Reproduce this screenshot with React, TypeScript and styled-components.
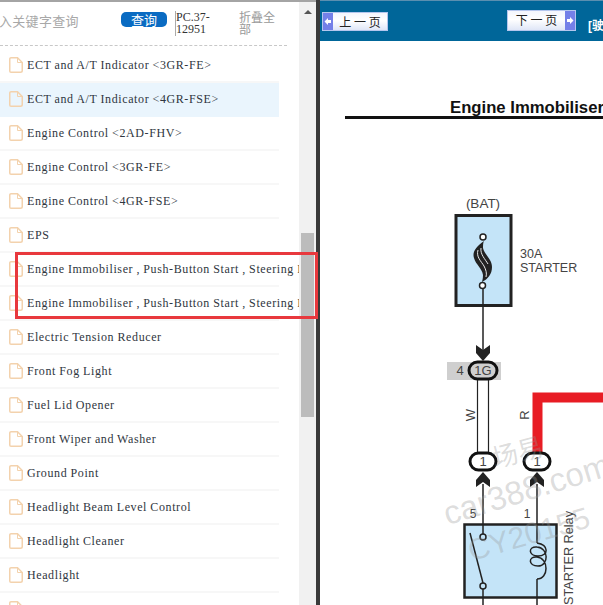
import React from "react";
import styled, { createGlobalStyle } from "styled-components";

const Global = createGlobalStyle`
  html, body { margin: 0; padding: 0; background: #fff; overflow: hidden; }
  #root { width: 603px; height: 605px; }
`;
const Page = styled.div`
  position: relative; display: flex; width: 603px; height: 605px; overflow: hidden;
  font-family: "Liberation Serif", "Noto Sans CJK SC", serif;
`;
const Sidebar = styled.aside`
  display: flex; flex: none; width: 316px; box-sizing: border-box;
  border-top: 2px solid #a4a4a4;
`;
const ListPane = styled.div`
  flex: none; width: 299px; overflow: hidden; background: #fff;
`;
const SearchBar = styled.div`
  display: flex; width: 287px; height: 44px; box-sizing: border-box; align-items: flex-start;
  border-bottom: 1px dashed #c8c8c8;
`;
const Keyword = styled.div`
  flex: none; width: 121px; margin-top: 9px; font: 13px/20px "Noto Sans CJK SC", sans-serif; color: #a8a8a8;
  letter-spacing: 0.3px; white-space: nowrap; overflow: hidden; text-indent: -1px;
`;
const QueryButton = styled.button`
  flex: none; width: 46px; height: 15px; margin-top: 10px; padding: 0; border: 0; border-radius: 5px;
  background: #0a6bc2; color: #fff; font: 13px/15px "Noto Sans CJK SC", sans-serif;
`;
const PartNo = styled.div`
  flex: none; width: 63px; margin: 9px 0 0 8px; padding-left: 0; box-sizing: border-box; height: 25px;
  border-left: 1px solid #aaa; font-size: 12px; line-height: 12px; color: #333;
`;
const Collapse = styled.div`
  flex: none; width: 37px; margin: 9px 0 0 1px; font: 12px/12px "Noto Sans CJK SC", sans-serif; color: #999;
`;
const Rows = styled.ul`
  list-style: none; margin: 3px 0 0; padding: 0;
`;
const Row = styled.li<{ $active?: boolean }>`
  display: flex; align-items: center; gap: 4px; width: 279px; height: 34px; box-sizing: border-box;
  padding-left: 9px; border-bottom: 2px solid #f7f7f7;
  background: ${(p) => (p.$active ? "#eaf5fd" : "#fff")};
  ${(p) => p.$active && "border-bottom-color: #eaf5fd;"}
  font-size: 12px; letter-spacing: 0.6px; word-spacing: -0.3px; color: #2f3640; white-space: nowrap;
`;
const RowLabel = styled.span`
  flex: none;
`;
const Track = styled.div`
  flex: none; width: 17px; background: #f1f1f1; position: relative;
`;
const ArrowUp = styled.div`
  width: 0; margin: 8px auto 0; border: 4px solid transparent; border-top: 0; border-bottom: 4px solid #555;
`;
const Thumb = styled.div`
  width: 13px; height: 184px; margin: 219px 0 0 2px; background: #bcbcbc;
`;
const Divider = styled.div`
  flex: none; width: 4px; background: #3a3a3a;
`;
const Viewer = styled.main`
  flex: 1; min-width: 0; display: flex; flex-direction: column; overflow: hidden;
`;
const Toolbar = styled.div`
  flex: none; display: flex; height: 41px; box-sizing: border-box; align-items: flex-start;
  background: #006699; border-top: 1px solid #5a8fb0; padding-left: 2px; white-space: nowrap;
`;
const PageButton = styled.button<{ $next?: boolean }>`
  flex: none; display: flex; flex-direction: ${(p) => (p.$next ? "row-reverse" : "row")}; align-items: stretch;
  width: ${(p) => (p.$next ? 69 : 66)}px; height: ${(p) => (p.$next ? 21 : 19)}px;
  margin: ${(p) => (p.$next ? "9px 0 0 119px" : "11px 0 0")};
  padding: 0; border: 1px solid #b4c6ee; background: linear-gradient(#f4f6fd, #fff 45%, #dfe6f7);
  font: 12px/17px "Noto Sans CJK SC", sans-serif; color: #222;
`;
const ArrowCap = styled.span`
  flex: none; width: 10px; display: flex; align-items: center; justify-content: center; background: #7480e8;
`;
const ButtonText = styled.span`
  flex: 1; text-align: center;
`;
const Crumb = styled.span`
  margin: 17px 0 0 12px; font: bold 12px/16px "Liberation Sans", "Noto Sans CJK SC", sans-serif; color: #fff;
`;
const Sheet = styled.div`
  flex: 1; min-height: 0; background: #fff;
`;
const Drawing = styled.svg`
  display: block; font-family: "Liberation Sans", sans-serif;
`;
const Highlight = styled.div`
  position: absolute; left: 15px; top: 252px; width: 303px; height: 67px; box-sizing: border-box;
  border: 3px solid #e8383d; pointer-events: none;
`;
const Watermark = styled.span<{ $x: number; $y: number; $size: number; $rot: number }>`
  position: absolute; left: ${(p) => p.$x}px; top: ${(p) => p.$y}px; font: ${(p) => p.$size}px/1 "Liberation Sans", "Noto Sans CJK SC", sans-serif;
  color: rgba(150, 150, 150, 0.32); transform: rotate(${(p) => p.$rot}deg); transform-origin: left bottom; white-space: nowrap; pointer-events: none;
`;

const items = [
  "ECT and A/T Indicator <3GR-FE>",
  "ECT and A/T Indicator <4GR-FSE>",
  "Engine Control <2AD-FHV>",
  "Engine Control <3GR-FE>",
  "Engine Control <4GR-FSE>",
  "EPS",
  "Engine Immobiliser , Push-Button Start , Steering Lock",
  "Engine Immobiliser , Push-Button Start , Steering Lock",
  "Electric Tension Reducer",
  "Front Fog Light",
  "Fuel Lid Opener",
  "Front Wiper and Washer",
  "Ground Point",
  "Headlight Beam Level Control",
  "Headlight Cleaner",
  "Headlight",
  "Horn",
];

const FileIcon = () => (
  <svg width="14" height="16" viewBox="0 0 14 16" fill="none" style={{ flex: "none" }}>
    <path d="M2 .75h6.5L13.25 5.5V13.5a1.75 1.75 0 0 1-1.75 1.75h-9.5A1.25 1.25 0 0 1 .75 14V2A1.25 1.25 0 0 1 2 .75Z" stroke="#f3d2ad" strokeWidth="1.5" />
    <path d="M8.5 1v4.5h4.5" stroke="#f3d2ad" strokeWidth="1" />
  </svg>
);

const CapArrow = ({ right }: { right?: boolean }) => (
  <svg width="8" height="9" viewBox="0 0 8 9">
    <path d={right ? "M1 3H4V1L7.500 4.500L4 8V6H1Z" : "M7 3H4V1L.5 4.500L4 8V6H7Z"} fill="#fff" />
  </svg>
);

const Pill = ({ x, y, w, label }: { x: number; y: number; w: number; label: string }) => (
  <g>
    <rect x={x} y={y} width={w} height={17} rx={8.5} fill="none" stroke="#111" strokeWidth="3" />
    <text x={x + w / 2} y={y + 13} fontSize="13" textAnchor="middle" fill="#444">{label}</text>
  </g>
);
const ArrowDown = ({ x, y }: { x: number; y: number }) => (
  <path d={`M${x - 7} ${y}L${x} ${y + 5}L${x + 7} ${y}V${y + 8}L${x} ${y + 16}L${x - 7} ${y + 8}Z`} fill="#222" />
);
const ArrowIn = ({ x, y }: { x: number; y: number }) => (
  <path d={`M${x - 7} ${y + 15}L${x} ${y + 10}L${x + 7} ${y + 15}V${y + 8}L${x} ${y}L${x - 7} ${y + 8}Z`} fill="#222" />
);

export default function App() {
  return (
    <Page>
      <Global />
      <Sidebar>
        <ListPane>
          <SearchBar>
            <Keyword>入关键字查询</Keyword>
            <QueryButton>查询</QueryButton>
            <PartNo>PC.37-12951</PartNo>
            <Collapse>折叠全部</Collapse>
          </SearchBar>
          <Rows>
            {items.map((t, i) => (
              <Row key={i} $active={i === 1}>
                <FileIcon />
                <RowLabel>{t}</RowLabel>
              </Row>
            ))}
          </Rows>
        </ListPane>
        <Track>
          <ArrowUp />
          <Thumb />
        </Track>
      </Sidebar>
      <Divider />
      <Viewer>
        <Toolbar>
          <PageButton>
            <ArrowCap><CapArrow /></ArrowCap>
            <ButtonText>上 一 页</ButtonText>
          </PageButton>
          <PageButton $next>
            <ArrowCap><CapArrow right /></ArrowCap>
            <ButtonText>下 一 页</ButtonText>
          </PageButton>
          <Crumb>[驶</Crumb>
        </Toolbar>
        <Sheet>
          <Drawing width="283" height="564" viewBox="320 41 283 564">
            <text x="450" y="113" fontSize="16.700" fontWeight="700" fill="#111">Engine Immobiliser</text>
            <rect x="345" y="116" width="258" height="3" fill="#111" />

            <text x="483" y="208" fontSize="13.500" textAnchor="middle" fill="#444">(BAT)</text>
            <rect x="456" y="215.500" width="55" height="90" fill="#c4e4f8" stroke="#222" strokeWidth="3" />
            <path d="M484 241C476 247 472 252 474 258C476 265 482 268 483 275C483 279 482 281 482 282C488 279 492 274 492 267C492 259 484 254 483 248C483 245 483 243 484 241Z" fill="#222" />
            <path d="M478 250C476 257 481 261 484 266C486 270 487 273 486 277M481 248C480 254 485 259 488 264" stroke="#e8e8e8" strokeWidth="1" fill="none" />
            <circle cx="483" cy="237" r="3" fill="#fff" stroke="#222" strokeWidth="1.500" />
            <circle cx="482.500" cy="285.500" r="3" fill="#fff" stroke="#222" strokeWidth="1.500" />
            <text x="520" y="258" fontSize="12.500" fill="#444">30A</text>
            <text x="520" y="272" fontSize="12.500" fill="#444">STARTER</text>
            <path d="M483 289V350" stroke="#222" strokeWidth="1.500" />
            <ArrowDown x={483} y={345} />

            <rect x="447" y="362" width="54" height="18" fill="#cfcfcf" />
            <text x="460" y="375" fontSize="13" textAnchor="middle" fill="#444">4</text>
            <Pill x={469} y={362} w={28} label="1G" />
            <path d="M477.500 380V452M488.500 380V452" stroke="#222" strokeWidth="1.200" />
            <text transform="translate(475 415) rotate(-90)" fontSize="13" textAnchor="middle" fill="#444">W</text>

            <path d="M537.500 452V397.500H603" fill="none" stroke="#e81c24" strokeWidth="10" />
            <text transform="translate(529 415) rotate(-90)" fontSize="13" textAnchor="middle" fill="#444">R</text>
            <Pill x={470} y={453} w={26} label="1" />
            <Pill x={524} y={453} w={26} label="1" />
            <ArrowIn x={483} y={472} />
            <ArrowIn x={537} y={472} />
            <path d="M483 484V536M537 484V543" stroke="#222" strokeWidth="1.500" />
            <text x="473" y="518" fontSize="12" textAnchor="middle" fill="#444">5</text>
            <text x="527" y="518" fontSize="12" textAnchor="middle" fill="#444">1</text>

            <rect x="464.500" y="524.500" width="92" height="73" fill="#c4e4f8" stroke="#222" strokeWidth="2.500" />
            <path d="M483 524V534M537 524V543" stroke="#222" strokeWidth="1.500" />
            <circle cx="483" cy="537" r="3" fill="#c4e4f8" stroke="#222" strokeWidth="1.500" />
            <circle cx="483" cy="586" r="3" fill="#c4e4f8" stroke="#222" strokeWidth="1.500" />
            <path d="M470 533L483 583" stroke="#222" strokeWidth="1.500" />
            <path d="M537 543C549 545 549 556 538 556C528 556 528 546 537 547C549 548 549 566 538 566C528 566 528 556 537 557C549 558 549 579 537 579" fill="none" stroke="#222" strokeWidth="1.500" />
            <path d="M483 589V605M537 579V605" stroke="#222" strokeWidth="1.500" />
            <text transform="translate(573 605) rotate(-90)" fontSize="12.700" fill="#444">STARTER Relay</text>
          </Drawing>
        </Sheet>
      </Viewer>
      <Highlight />
      <Watermark $x={496} $y={446} $size={26} $rot={-15}>场易</Watermark>
      <Watermark $x={449} $y={497} $size={33} $rot={-17}>car388.com</Watermark>
      <Watermark $x={473} $y={536} $size={30} $rot={-16}>CY20155</Watermark>
    </Page>
  );
}
